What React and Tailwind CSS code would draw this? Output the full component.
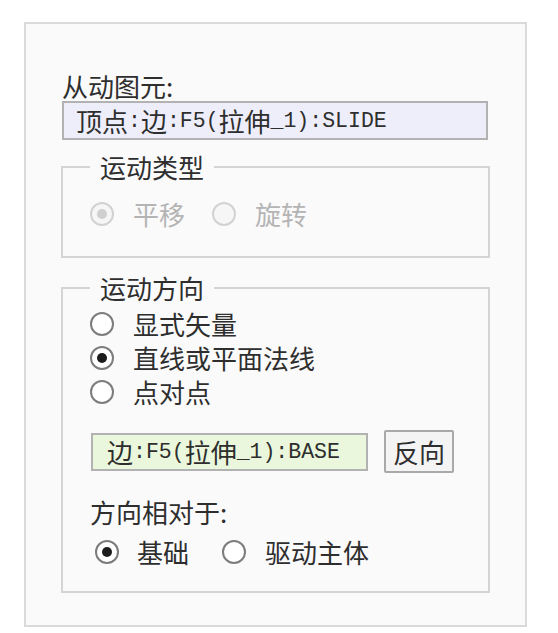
const mono = "font-['Liberation_Mono',monospace] text-[21.5px]";

function Mixed({ text }) {
  // split into CJK runs and latin runs so latin can use the narrow mono face
  const parts = text.match(/[\u4e00-\u9fff]+|[^\u4e00-\u9fff]+/g) || [];
  return parts.map((p, i) =>
    /[\u4e00-\u9fff]/.test(p) ? (
      <span key={i}>{p}</span>
    ) : (
      <span key={i} className={mono}>
        {p}
      </span>
    )
  );
}

function Radio({ checked, disabled }) {
  if (disabled) {
    return (
      <span className="flex h-[24px] w-[24px] shrink-0 items-center justify-center rounded-full border-2 border-[#d2d2d2] bg-[#f6f6f6]">
        {checked && <span className="h-[10px] w-[10px] rounded-full bg-[#cfcfcf]" />}
      </span>
    );
  }
  return (
    <span className="flex h-[24px] w-[24px] shrink-0 items-center justify-center rounded-full border-2 border-[#7c7c7c] bg-white">
      {checked && <span className="h-[10px] w-[10px] rounded-full bg-[#1c1c1c]" />}
    </span>
  );
}

function Option({ label, checked, disabled, gap = 'gap-[19px]' }) {
  return (
    <label className={`flex items-center ${gap}`}>
      <Radio checked={checked} disabled={disabled} />
      <span className={disabled ? 'text-[#b4b4b4]' : ''}>{label}</span>
    </label>
  );
}

export default function App() {
  return (
    <div className="min-h-screen bg-white pl-[24px] pt-[22px] font-['Noto_Sans_CJK_SC',sans-serif] text-[26px] leading-[30px] text-[#2e2e2e]">
      <div className="h-[605px] w-[503px] border-2 border-[#dadada] bg-[#fafafa] pl-[36px] pt-[47px]">
        <div className="h-[30px]">从动图元:</div>
        <div className="flex h-[39px] w-[426px] items-center border-2 border-[#b2b2b2] bg-[#eeeefa] pl-[12px]">
          <Mixed text="顶点:边:F5(拉伸_1):SLIDE" />
        </div>

        <fieldset className="-ml-[1px] mt-[12px] w-[429px] border-2 border-[#d4d4d4] pb-[27px] pl-[27px]">
          <legend className="px-[10px]">运动类型</legend>
          <div className="mt-[17px] flex h-[30px] items-center">
            <Option label="平移" checked disabled />
            <div className="ml-[27px]">
              <Option label="旋转" disabled />
            </div>
          </div>
        </fieldset>

        <fieldset className="-ml-[1px] mt-[15px] w-[429px] border-2 border-[#d4d4d4] pb-[22px] pl-[27px]">
          <legend className="px-[10px]">运动方向</legend>
          <div className="mt-[4px] flex flex-col">
            <div className="flex h-[34px] items-center">
              <Option label="显式矢量" />
            </div>
            <div className="flex h-[34px] items-center">
              <Option label="直线或平面法线" checked />
            </div>
            <div className="flex h-[34px] items-center">
              <Option label="点对点" />
            </div>
          </div>

          <div className="mt-[21px] flex h-[43px] items-center gap-[16px]">
            <div className="ml-[1px] flex h-[38px] w-[277px] items-center border-2 border-[#b2b2b2] bg-[#eaf7dc] pl-[14px]">
              <Mixed text="边:F5(拉伸_1):BASE" />
            </div>
            <button className="h-[43px] w-[70px] rounded-[2px] border-2 border-[#a9a9a9] bg-[#f4f4f4] text-[#2e2e2e]">
              反向
            </button>
          </div>

          <div className="mt-[24px] h-[30px]">方向相对于:</div>
          <div className="ml-[5px] mt-[8px] flex h-[34px] items-center">
            <Option label="基础" checked gap="gap-[18px]" />
            <div className="ml-[33px]">
              <Option label="驱动主体" />
            </div>
          </div>
        </fieldset>
      </div>
    </div>
  );
}
